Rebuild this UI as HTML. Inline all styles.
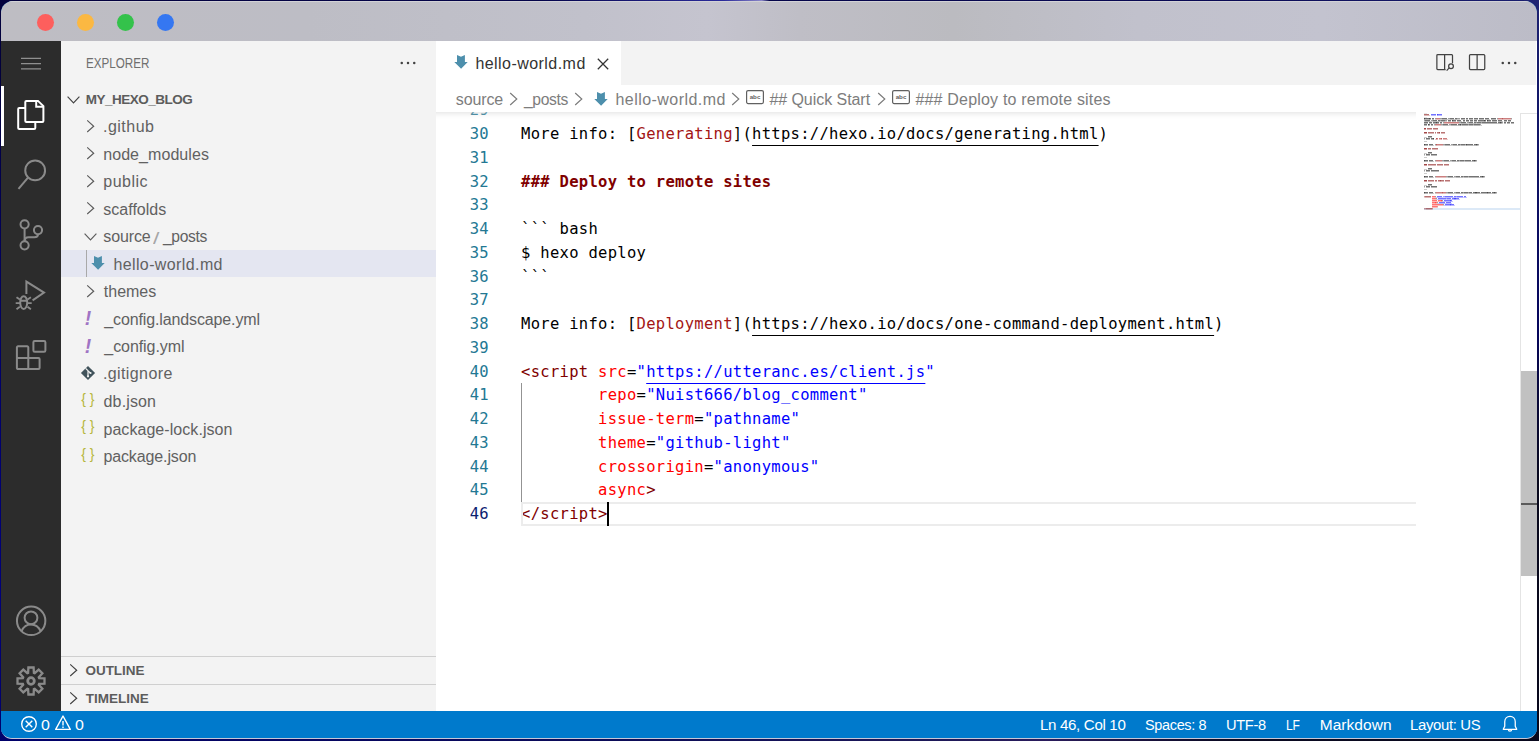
<!DOCTYPE html>
<html lang="en">
<head>
<meta charset="utf-8">
<title>hello-world.md - my_hexo_blog - Visual Studio Code</title>
<style>
*{box-sizing:border-box;margin:0;padding:0}
html,body{width:1539px;height:741px;overflow:hidden}
body{background:#05053a;font-family:"Liberation Sans",sans-serif;font-size:16px;color:#616161;position:relative}
.abs{position:absolute}
#win{position:absolute;left:1px;top:1px;width:1536px;height:738px;border-radius:12px 12px 11px 11px;overflow:hidden;background:#007acc;border-bottom:1px solid #c6c6d6}
#titlebar{position:absolute;left:0;top:0;width:1536px;height:40px;background:linear-gradient(90deg,#bebdc3 0%,#bdbdc5 20%,#c1c1cb 38%,#c5c4cf 46%,#bfbec6 52%,#bbbbc0 62%,#c1c1cc 74%,#c3c3cf 86%,#bcbcc7 100%);box-shadow:inset 0 1px 0 #d2d2d6}
.dot{position:absolute;top:12.9px;width:17px;height:17px;border-radius:50%}
#activity{position:absolute;left:0;top:40px;width:60px;height:670px;background:#2c2c2c}
#sidebar{position:absolute;left:60px;top:40px;width:375px;height:670px;background:#f3f3f3}
#editor{position:absolute;left:435px;top:40px;width:1101px;height:670px;background:#fff}
#status{position:absolute;left:0;top:710px;width:1536px;height:27px;background:#007acc;color:#fff;font-size:15.5px}
.ai{position:absolute;left:15px;width:30px;height:30px}
.ai svg{display:block;overflow:visible}
.row{position:absolute;left:0;width:375px;height:27.5px;line-height:27.5px;white-space:nowrap}
.row .t{position:absolute;top:0}
.chev{position:absolute;width:20px;height:20px;top:3.75px}
.chev svg{width:20px;height:20px;display:block}
.ic{position:absolute;top:3.75px;width:20px;height:20px}
.ic svg{width:20px;height:20px;display:block}
#code{position:absolute;left:0;top:0;width:1101px;height:670px;font-family:"DejaVu Sans Mono","Liberation Mono",monospace;font-size:15.5px;letter-spacing:0.294px;color:#000}
.ln{position:absolute;left:0;width:53px;text-align:right;height:23.75px;line-height:23.75px;color:#237893;white-space:pre}
.cl{position:absolute;left:85px;height:23.75px;line-height:23.75px;white-space:pre}
.r{color:#a31515}.m{color:#800000}.a{color:#f00}.s{color:#00f}
.u{text-decoration:underline;text-decoration-thickness:1px;text-underline-offset:6px}
.st{position:absolute;top:0;height:27px;line-height:27px;white-space:nowrap}
#crumbs svg,#tabs svg{display:block}
</style>
</head>
<body>
<div class="abs" style="left:0;top:0;width:3px;height:741px;background:linear-gradient(180deg,#02003c 0%,#02003c 10%,#000066 45%,#00007a 80%,#00006a 100%)"></div>
<div class="abs" style="left:0;top:0;width:1539px;height:14px;background:linear-gradient(90deg,#02003c 0%,#04044a 35%,#2a2a9a 47%,#8a86c8 49.500%,#05054a 50%,#0a0a55 80%,#1a1f70 100%)"></div>
<div class="abs" style="left:1524px;top:0;width:15px;height:741px;background:linear-gradient(180deg,#1f2473 0%,#141a6b 10%,#05055c 45%,#0a0a40 52%,#0a0a1e 65%,#08081c 100%)"></div>
<div class="abs" style="left:0;top:727px;width:1539px;height:14px;background:linear-gradient(90deg,#00006a 0%,#0c0c58 40%,#1c1858 60%,#2a1c5c 68%,#0a0a22 80%,#08081c 100%)"></div>
<div id="win">
  <div id="titlebar">
    <div class="dot" style="left:35.5px;background:#fd5f5d"></div>
    <div class="dot" style="left:75.5px;background:#fbb842"></div>
    <div class="dot" style="left:115.5px;background:#34c24b"></div>
    <div class="dot" style="left:155.5px;background:#3577f1"></div>
  </div>

  <div id="activity">
    <div class="abs" style="left:0;top:45px;width:2.5px;height:60px;background:#fff"></div>
    <!-- menu -->
    <div class="abs" style="left:20px;top:12.800px;width:20px;height:20px">
      <svg viewBox="0 0 16 16" width="20" height="20" style="display:block"><path d="M0 3.500h16M0 7.700h16M0 11.900h16" stroke="#8f8f8f" stroke-width="1" fill="none"/></svg>
    </div>
    <!-- files -->
    <div class="ai" style="top:59px"><svg viewBox="0 0 30 30" width="30" height="30" fill="none" stroke="#fff" stroke-width="2.0"><path d="M10.400 0.900H22l5.400 5.200V21a1.100 1.100 0 0 1-1.100 1.100H10.400A1.100 1.100 0 0 1 9.300 21V2a1.100 1.100 0 0 1 1.100-1.100z"/><path d="M20.200 0.900V6.800h7.200"/><path d="M9.300 8H3.300a1.100 1.100 0 0 0-1.100 1.100V27.900A1.100 1.100 0 0 0 3.300 29H18.200a1.100 1.100 0 0 0 1.100-1.100V22.100"/></svg></div>
    <div class="ai" style="top:119px"><svg viewBox="0 0 30 30" width="30" height="30" fill="none" stroke="#8a8a8a" stroke-width="2.0"><circle cx="19.150" cy="10.400" r="9.900"/><path d="M12.200 17.400 2.500 28.800"/></svg></div>
    <div class="ai" style="top:179px"><svg viewBox="0 0 30 30" width="30" height="30" fill="none" stroke="#8a8a8a" stroke-width="2.0"><circle cx="8.600" cy="4.300" r="4.100"/><circle cx="8.600" cy="25.300" r="4.100"/><circle cx="22" cy="10.100" r="4.100"/><path d="M8.600 8.400V21.200"/><path d="M22 14.200C22 16.500 20.500 17.300 18.500 17.300H12.500C10 17.300 8.600 18.800 8.600 21.200"/></svg></div>
    <div class="ai" style="top:239px"><svg viewBox="0 0 30 30" width="30" height="30" fill="none" stroke="#8a8a8a" stroke-width="2.0"><path d="M10.400 14V1.600L28 12.600 16.600 20.300"/><ellipse cx="7.700" cy="22.600" rx="3.500" ry="6.400"/><path d="M4.200 20.700h7M0.500 17.300l3.400 2.200M14.900 17.300l-3.400 2.200M-.3 23.100h4.400M15.700 23.100h-4.400M.5 29.200l3.400-2.400M14.900 29.200l-3.400-2.400" stroke-width="1.900"/></svg></div>
    <div class="ai" style="top:299px"><svg viewBox="0 0 30 30" width="30" height="30" fill="none" stroke="#8a8a8a" stroke-width="2.0"><path d="M2 6.300h9.200a1.100 1.100 0 0 1 1.100 1.100V18h10.200a1.100 1.100 0 0 1 1.100 1.100V27.900A1.100 1.100 0 0 1 22.500 29H2A1.100 1.100 0 0 1 .9 27.900V7.400A1.100 1.100 0 0 1 2 6.300z"/><path d="M.9 18H12.300V29"/><rect x="17.400" y="0.900" width="12" height="10.900" rx="1.300"/></svg></div>
    <div class="ai" style="top:565px"><svg viewBox="0 0 30 30" width="30" height="30" fill="none" stroke="#8a8a8a" stroke-width="2.0"><circle cx="15.150" cy="14.800" r="14.200"/><circle cx="15" cy="11.800" r="6.400"/><path d="M5.600 25.200C7.400 21 11 18.600 15 18.600S22.700 21 24.600 25.200"/></svg></div>
    <div class="ai" style="top:625px"><svg viewBox="0 0 30 30" width="30" height="30" fill="none" stroke="#8a8a8a" stroke-width="2.0"><path d="M12.1 6.9 L12.4 1.5 L17.6 1.5 L17.9 6.9 L18.7 7.2 L22.7 3.6 L26.4 7.3 L22.8 11.3 L23.1 12.1 L28.5 12.4 L28.5 17.6 L23.1 17.9 L22.8 18.7 L26.4 22.7 L22.7 26.4 L18.7 22.8 L17.9 23.1 L17.6 28.5 L12.4 28.5 L12.1 23.1 L11.3 22.8 L7.3 26.4 L3.6 22.7 L7.2 18.7 L6.9 17.9 L1.5 17.6 L1.5 12.4 L6.9 12.1 L7.2 11.3 L3.6 7.3 L7.3 3.6 L11.3 7.2z" stroke-linejoin="miter" stroke-width="2.300"/><circle cx="15" cy="15" r="3.300" stroke-width="2.800"/></svg></div>
  </div>

  <div id="sidebar">
    <div class="abs" style="left:24.77px;top:1px;height:44px;line-height:44px;font-size:13.750px;color:#6f6f6f;transform:scaleX(0.8476);transform-origin:0 50%;white-space:nowrap">EXPLORER</div>
    <div class="abs" style="left:337px;top:12px;width:20px;height:20px"><svg viewBox="0 0 16 16" width="20" height="20"><circle cx="3" cy="8" r="1" fill="#424242"/><circle cx="8" cy="8" r="1" fill="#424242"/><circle cx="13" cy="8" r="1" fill="#424242"/></svg></div>
    <div id="tree" class="abs" style="left:0;top:44.250px;width:375px">
      <div class="row" style="top:0.600px"><div class="chev" style="left:3px"><svg viewBox="0 0 20 20"><path d="M3.600 6.700 9.500 12.900 15.400 6.700" fill="none" stroke="#424242" stroke-width="1.15"/></svg></div><span class="t" style="left:24.69px;letter-spacing:-0.497px;font-size:13.5px;font-weight:bold;color:#5c5c5c">MY_HEXO_BLOG</span></div>
      <div class="row" style="top:27.5px"><div class="chev" style="left:20px"><svg viewBox="0 0 20 20"><path d="M6.200 3.400 12.700 9.200 6.200 15" fill="none" stroke="#5c5c5c" stroke-width="1.15"/></svg></div><span class="t" style="left:41.96px;letter-spacing:0.487px">.github</span></div>
      <div class="row" style="top:55.0px"><div class="chev" style="left:20px"><svg viewBox="0 0 20 20"><path d="M6.200 3.400 12.700 9.200 6.200 15" fill="none" stroke="#5c5c5c" stroke-width="1.15"/></svg></div><span class="t" style="left:42.24px;letter-spacing:0.062px;top:1px">node_modules</span></div>
      <div class="row" style="top:82.5px"><div class="chev" style="left:20px"><svg viewBox="0 0 20 20"><path d="M6.200 3.400 12.700 9.200 6.200 15" fill="none" stroke="#5c5c5c" stroke-width="1.15"/></svg></div><span class="t" style="left:42.24px;letter-spacing:0.496px">public</span></div>
      <div class="row" style="top:110.0px"><div class="chev" style="left:20px"><svg viewBox="0 0 20 20"><path d="M6.200 3.400 12.700 9.200 6.200 15" fill="none" stroke="#5c5c5c" stroke-width="1.15"/></svg></div><span class="t" style="left:42.32px;letter-spacing:0.010px;top:1px">scaffolds</span></div>
      <div class="row" style="top:137.5px"><div class="chev" style="left:20px"><svg viewBox="0 0 20 20"><path d="M3.600 6.700 9.500 12.900 15.400 6.700" fill="none" stroke="#5c5c5c" stroke-width="1.15"/></svg></div><span class="t" style="left:42.32px;letter-spacing:-0.136px">source</span><span class="t" style="left:92.20px;top:2.500px;font-size:17px;color:#a6a6a6;transform:scaleX(1.35);transform-origin:0 50%">/</span><span class="t" style="left:101.71px;letter-spacing:-0.350px;transform:scaleX(0.9759);transform-origin:0 50%">_posts</span></div>
      <div class="row" style="top:165.0px;background:#e4e6f1;height:26.750px"><div class="abs" style="left:25px;top:0;width:1px;height:26.750px;background:#a9a9a9"></div><div class="ic" style="left:27px"><svg viewBox="0 0 20 20"><path d="M6 1.900 10 3.700 13.900 1.900V9h2.800L10.100 15.800 3.300 9H6z" fill="#4d8fac"/></svg></div><span class="t" style="left:52.38px;letter-spacing:0.391px;top:1px">hello-world.md</span></div>
      <div class="row" style="top:192.5px"><div class="chev" style="left:20px"><svg viewBox="0 0 20 20"><path d="M6.200 3.400 12.700 9.200 6.200 15" fill="none" stroke="#5c5c5c" stroke-width="1.15"/></svg></div><span class="t" style="left:42.84px;letter-spacing:-0.008px">themes</span></div>
      <div class="row" style="top:220.0px"><div class="ic" style="left:17px"><svg viewBox="0 0 20 20"><text x="10" y="16" text-anchor="middle" font-family="Liberation Sans, sans-serif" font-size="19.500" font-weight="bold" font-style="italic" fill="#a074c4">!</text></svg></div><span class="t" style="left:43.32px;letter-spacing:-0.130px;top:1px">_config.landscape.yml</span></div>
      <div class="row" style="top:247.5px"><div class="ic" style="left:17px"><svg viewBox="0 0 20 20"><text x="10" y="16" text-anchor="middle" font-family="Liberation Sans, sans-serif" font-size="19.500" font-weight="bold" font-style="italic" fill="#a074c4">!</text></svg></div><span class="t" style="left:43.32px;letter-spacing:-0.072px">_config.yml</span></div>
      <div class="row" style="top:275.0px"><div class="ic" style="left:17px"><svg viewBox="0 0 20 20"><path d="M10 1.900 17.100 9 10 16.100 2.900 9z" fill="#41535b"/><path d="M7.600 4.300 12.200 8.900M10 6.400v5.800" stroke="#f3f3f3" stroke-width="1.200" fill="none"/><circle cx="12.500" cy="9" r="1.100" fill="#f3f3f3"/><circle cx="10" cy="12.300" r="1.100" fill="#f3f3f3"/></svg></div><span class="t" style="left:41.96px;letter-spacing:0.391px">.gitignore</span></div>
      <div class="row" style="top:302.5px"><div class="ic" style="left:17px"><svg viewBox="0 0 20 20"><text x="3.200" y="12.200" font-family="Liberation Sans, sans-serif" font-size="14" letter-spacing="4" fill="#b7b73b">{}</text></svg></div><span class="t" style="left:42.56px;letter-spacing:0.147px">db.json</span></div>
      <div class="row" style="top:330.0px"><div class="ic" style="left:17px"><svg viewBox="0 0 20 20"><text x="3.200" y="12.200" font-family="Liberation Sans, sans-serif" font-size="14" letter-spacing="4" fill="#b7b73b">{}</text></svg></div><span class="t" style="left:42.44px;letter-spacing:0.057px;top:1px">package-lock.json</span></div>
      <div class="row" style="top:357.5px"><div class="ic" style="left:17px"><svg viewBox="0 0 20 20"><text x="3.200" y="12.200" font-family="Liberation Sans, sans-serif" font-size="14" letter-spacing="4" fill="#b7b73b">{}</text></svg></div><span class="t" style="left:42.44px;letter-spacing:-0.120px">package.json</span></div>
    </div>
    <div class="abs" style="left:0;top:615px;width:375px;height:1px;background:#cfcfcf"></div><div class="row" style="top:616.1px"><div class="chev" style="left:3px;top:4.200px"><svg viewBox="0 0 20 20"><path d="M6.200 3.400 12.700 9.200 6.200 15" fill="none" stroke="#424242" stroke-width="1.15"/></svg></div><span class="t" style="left:24.46px;letter-spacing:-0.031px;font-size:13.5px;font-weight:bold;color:#5c5c5c">OUTLINE</span></div>
    <div class="abs" style="left:0;top:643px;width:375px;height:1px;background:#cfcfcf"></div><div class="row" style="top:644.1px"><div class="chev" style="left:3px;top:4.200px"><svg viewBox="0 0 20 20"><path d="M6.200 3.400 12.700 9.200 6.200 15" fill="none" stroke="#424242" stroke-width="1.15"/></svg></div><span class="t" style="left:24.86px;letter-spacing:-0.010px;font-size:13.5px;font-weight:bold;color:#5c5c5c">TIMELINE</span></div>
  </div>

  <div id="editor">
    <div id="code">
      <div class="ln" style="top:58.25px">29</div>
      <div class="ln" style="top:82.00px">30</div>
      <div class="cl" style="top:82.00px">More info: [<span class="r">Generating</span>](<span class="u">https://hexo.io/docs/generating.html</span>)</div>
      <div class="ln" style="top:105.75px">31</div>
      <div class="ln" style="top:129.50px">32</div>
      <div class="cl" style="top:129.50px"><b class="m">### Deploy to remote sites</b></div>
      <div class="ln" style="top:153.25px">33</div>
      <div class="ln" style="top:177.00px">34</div>
      <div class="cl" style="top:177.00px">``` bash</div>
      <div class="ln" style="top:200.75px">35</div>
      <div class="cl" style="top:200.75px">$ hexo deploy</div>
      <div class="ln" style="top:224.50px">36</div>
      <div class="cl" style="top:224.50px">```</div>
      <div class="ln" style="top:248.25px">37</div>
      <div class="ln" style="top:272.00px">38</div>
      <div class="cl" style="top:272.00px">More info: [<span class="r">Deployment</span>](<span class="u">https://hexo.io/docs/one-command-deployment.html</span>)</div>
      <div class="ln" style="top:295.75px">39</div>
      <div class="ln" style="top:319.50px">40</div>
      <div class="cl" style="top:319.50px"><span class="m">&lt;script</span> <span class="a">src</span>=<span class="s">"<span class="u">https://utteranc.es/client.js</span>"</span></div>
      <div class="ln" style="top:343.25px">41</div>
      <div class="cl" style="top:343.25px">        <span class="a">repo</span>=<span class="s">"Nuist666/blog_comment"</span></div>
      <div class="ln" style="top:367.00px">42</div>
      <div class="cl" style="top:367.00px">        <span class="a">issue-term</span>=<span class="s">"pathname"</span></div>
      <div class="ln" style="top:390.75px">43</div>
      <div class="cl" style="top:390.75px">        <span class="a">theme</span>=<span class="s">"github-light"</span></div>
      <div class="ln" style="top:414.50px">44</div>
      <div class="cl" style="top:414.50px">        <span class="a">crossorigin</span>=<span class="s">"anonymous"</span></div>
      <div class="ln" style="top:438.25px">45</div>
      <div class="cl" style="top:438.25px">        <span class="a">async</span><span class="m">&gt;</span></div>
      <div class="ln" style="top:462.00px;color:#0b216f">46</div>
      <div class="cl" style="top:462.00px"><span class="m">&lt;/script&gt;</span></div>
      <div class="abs" style="left:85px;top:461px;width:895px;height:24px;border-top:2px solid #ececec;border-bottom:2px solid #ececec;border-left:2px solid #ececec"></div>
      <div class="abs" style="left:85px;top:342.350px;width:1px;height:118.650px;background:#939393"></div>
      <div class="abs" style="left:170.500px;top:461px;width:2.500px;height:24px;background:#000"></div>
      <div class="abs" style="left:0;top:71px;width:980px;height:7.500px;box-shadow:inset 0 7.500px 7.500px -7.500px #d6d6d6"></div>
      <svg class="abs" style="left:988px;top:71px;background:#fff" width="96" height="100" viewBox="0 0 96 100" shape-rendering="crispEdges" aria-hidden="true"><rect x="0" y="96" width="96" height="2" fill="#dce9f7"/><rect x="0" y="0.5" width="3" height="1" fill="#808080" fill-opacity="0.20"/><rect x="0" y="2" width="5" height="1" fill="#800000" fill-opacity="0.55"/><rect x="0" y="3" width="5" height="1" fill="#800000" fill-opacity="0.28"/><rect x="5" y="2.5" width="1" height="1" fill="#800000" fill-opacity="0.20"/><rect x="7" y="2" width="5" height="1" fill="#0000ff" fill-opacity="0.55"/><rect x="7" y="3" width="5" height="1" fill="#0000ff" fill-opacity="0.28"/><rect x="13" y="2" width="1" height="1" fill="#0000ff" fill-opacity="0.72"/><rect x="13" y="3" width="1" height="1" fill="#0000ff" fill-opacity="0.36"/><rect x="14" y="2" width="4" height="1" fill="#0000ff" fill-opacity="0.55"/><rect x="14" y="3" width="4" height="1" fill="#0000ff" fill-opacity="0.28"/><rect x="0" y="4.5" width="3" height="1" fill="#808080" fill-opacity="0.20"/><rect x="0" y="6" width="1" height="1" fill="#000000" fill-opacity="0.72"/><rect x="0" y="7" width="1" height="1" fill="#000000" fill-opacity="0.36"/><rect x="1" y="6" width="4" height="1" fill="#000000" fill-opacity="0.55"/><rect x="1" y="7" width="4" height="1" fill="#000000" fill-opacity="0.28"/><rect x="5" y="6" width="1" height="1" fill="#000000" fill-opacity="0.72"/><rect x="5" y="7" width="1" height="1" fill="#000000" fill-opacity="0.36"/><rect x="6" y="6" width="1" height="1" fill="#000000" fill-opacity="0.55"/><rect x="6" y="7" width="1" height="1" fill="#000000" fill-opacity="0.28"/><rect x="8" y="6" width="2" height="1" fill="#000000" fill-opacity="0.55"/><rect x="8" y="7" width="2" height="1" fill="#000000" fill-opacity="0.28"/><rect x="11" y="6" width="1" height="1" fill="#000000" fill-opacity="0.38"/><rect x="11" y="7" width="1" height="1" fill="#000000" fill-opacity="0.19"/><rect x="12" y="6" width="4" height="1" fill="#a31515" fill-opacity="0.55"/><rect x="12" y="7" width="4" height="1" fill="#a31515" fill-opacity="0.28"/><rect x="16" y="6" width="2" height="1" fill="#000000" fill-opacity="0.38"/><rect x="16" y="7" width="2" height="1" fill="#000000" fill-opacity="0.19"/><rect x="18" y="6" width="5" height="1" fill="#000000" fill-opacity="0.55"/><rect x="18" y="7" width="5" height="1" fill="#000000" fill-opacity="0.28"/><rect x="23" y="6.5" width="1" height="1" fill="#000000" fill-opacity="0.20"/><rect x="24" y="6" width="2" height="1" fill="#000000" fill-opacity="0.38"/><rect x="24" y="7" width="2" height="1" fill="#000000" fill-opacity="0.19"/><rect x="26" y="6" width="4" height="1" fill="#000000" fill-opacity="0.55"/><rect x="26" y="7" width="4" height="1" fill="#000000" fill-opacity="0.28"/><rect x="30" y="6.5" width="1" height="1" fill="#000000" fill-opacity="0.20"/><rect x="31" y="6" width="2" height="1" fill="#000000" fill-opacity="0.55"/><rect x="31" y="7" width="2" height="1" fill="#000000" fill-opacity="0.28"/><rect x="33" y="6" width="3" height="1" fill="#000000" fill-opacity="0.38"/><rect x="33" y="7" width="3" height="1" fill="#000000" fill-opacity="0.19"/><rect x="37" y="6" width="4" height="1" fill="#000000" fill-opacity="0.55"/><rect x="37" y="7" width="4" height="1" fill="#000000" fill-opacity="0.28"/><rect x="42" y="6" width="2" height="1" fill="#000000" fill-opacity="0.55"/><rect x="42" y="7" width="2" height="1" fill="#000000" fill-opacity="0.28"/><rect x="45" y="6" width="4" height="1" fill="#000000" fill-opacity="0.55"/><rect x="45" y="7" width="4" height="1" fill="#000000" fill-opacity="0.28"/><rect x="50" y="6" width="4" height="1" fill="#000000" fill-opacity="0.55"/><rect x="50" y="7" width="4" height="1" fill="#000000" fill-opacity="0.28"/><rect x="55" y="6" width="5" height="1" fill="#000000" fill-opacity="0.55"/><rect x="55" y="7" width="5" height="1" fill="#000000" fill-opacity="0.28"/><rect x="61" y="6" width="4" height="1" fill="#000000" fill-opacity="0.55"/><rect x="61" y="7" width="4" height="1" fill="#000000" fill-opacity="0.28"/><rect x="65" y="6.5" width="1" height="1" fill="#000000" fill-opacity="0.20"/><rect x="67" y="6" width="5" height="1" fill="#000000" fill-opacity="0.55"/><rect x="67" y="7" width="5" height="1" fill="#000000" fill-opacity="0.28"/><rect x="73" y="6" width="1" height="1" fill="#000000" fill-opacity="0.38"/><rect x="73" y="7" width="1" height="1" fill="#000000" fill-opacity="0.19"/><rect x="74" y="6" width="4" height="1" fill="#a31515" fill-opacity="0.55"/><rect x="74" y="7" width="4" height="1" fill="#a31515" fill-opacity="0.28"/><rect x="78" y="6" width="1" height="1" fill="#a31515" fill-opacity="0.72"/><rect x="78" y="7" width="1" height="1" fill="#a31515" fill-opacity="0.36"/><rect x="79" y="6" width="8" height="1" fill="#a31515" fill-opacity="0.55"/><rect x="79" y="7" width="8" height="1" fill="#a31515" fill-opacity="0.28"/><rect x="87" y="6" width="1" height="1" fill="#000000" fill-opacity="0.38"/><rect x="87" y="7" width="1" height="1" fill="#000000" fill-opacity="0.19"/><rect x="0" y="8" width="1" height="1" fill="#000000" fill-opacity="0.38"/><rect x="0" y="9" width="1" height="1" fill="#000000" fill-opacity="0.19"/><rect x="1" y="8" width="5" height="1" fill="#000000" fill-opacity="0.55"/><rect x="1" y="9" width="5" height="1" fill="#000000" fill-opacity="0.28"/><rect x="6" y="8.5" width="1" height="1" fill="#000000" fill-opacity="0.20"/><rect x="7" y="8" width="2" height="1" fill="#000000" fill-opacity="0.38"/><rect x="7" y="9" width="2" height="1" fill="#000000" fill-opacity="0.19"/><rect x="9" y="8" width="4" height="1" fill="#000000" fill-opacity="0.55"/><rect x="9" y="9" width="4" height="1" fill="#000000" fill-opacity="0.28"/><rect x="13" y="8.5" width="1" height="1" fill="#000000" fill-opacity="0.20"/><rect x="14" y="8" width="2" height="1" fill="#000000" fill-opacity="0.55"/><rect x="14" y="9" width="2" height="1" fill="#000000" fill-opacity="0.28"/><rect x="16" y="8" width="1" height="1" fill="#000000" fill-opacity="0.38"/><rect x="16" y="9" width="1" height="1" fill="#000000" fill-opacity="0.19"/><rect x="17" y="8" width="4" height="1" fill="#000000" fill-opacity="0.55"/><rect x="17" y="9" width="4" height="1" fill="#000000" fill-opacity="0.28"/><rect x="21" y="8" width="2" height="1" fill="#000000" fill-opacity="0.38"/><rect x="21" y="9" width="2" height="1" fill="#000000" fill-opacity="0.19"/><rect x="24" y="8" width="3" height="1" fill="#000000" fill-opacity="0.55"/><rect x="24" y="9" width="3" height="1" fill="#000000" fill-opacity="0.28"/><rect x="28" y="8" width="1" height="1" fill="#000000" fill-opacity="0.72"/><rect x="28" y="9" width="1" height="1" fill="#000000" fill-opacity="0.36"/><rect x="29" y="8" width="3" height="1" fill="#000000" fill-opacity="0.55"/><rect x="29" y="9" width="3" height="1" fill="#000000" fill-opacity="0.28"/><rect x="33" y="8" width="4" height="1" fill="#000000" fill-opacity="0.55"/><rect x="33" y="9" width="4" height="1" fill="#000000" fill-opacity="0.28"/><rect x="37" y="8.5" width="1" height="1" fill="#000000" fill-opacity="0.20"/><rect x="39" y="8" width="2" height="1" fill="#000000" fill-opacity="0.55"/><rect x="39" y="9" width="2" height="1" fill="#000000" fill-opacity="0.28"/><rect x="42" y="8" width="3" height="1" fill="#000000" fill-opacity="0.55"/><rect x="42" y="9" width="3" height="1" fill="#000000" fill-opacity="0.28"/><rect x="46" y="8" width="3" height="1" fill="#000000" fill-opacity="0.55"/><rect x="46" y="9" width="3" height="1" fill="#000000" fill-opacity="0.28"/><rect x="50" y="8" width="3" height="1" fill="#000000" fill-opacity="0.55"/><rect x="50" y="9" width="3" height="1" fill="#000000" fill-opacity="0.28"/><rect x="54" y="8" width="6" height="1" fill="#000000" fill-opacity="0.55"/><rect x="54" y="9" width="6" height="1" fill="#000000" fill-opacity="0.28"/><rect x="60" y="8" width="1" height="1" fill="#000000" fill-opacity="0.72"/><rect x="60" y="9" width="1" height="1" fill="#000000" fill-opacity="0.36"/><rect x="61" y="8" width="1" height="1" fill="#000000" fill-opacity="0.55"/><rect x="61" y="9" width="1" height="1" fill="#000000" fill-opacity="0.28"/><rect x="63" y="8" width="1" height="1" fill="#000000" fill-opacity="0.72"/><rect x="63" y="9" width="1" height="1" fill="#000000" fill-opacity="0.36"/><rect x="64" y="8" width="3" height="1" fill="#000000" fill-opacity="0.55"/><rect x="64" y="9" width="3" height="1" fill="#000000" fill-opacity="0.28"/><rect x="68" y="8" width="5" height="1" fill="#000000" fill-opacity="0.55"/><rect x="68" y="9" width="5" height="1" fill="#000000" fill-opacity="0.28"/><rect x="74" y="8" width="4" height="1" fill="#000000" fill-opacity="0.55"/><rect x="74" y="9" width="4" height="1" fill="#000000" fill-opacity="0.28"/><rect x="78" y="8.5" width="1" height="1" fill="#000000" fill-opacity="0.20"/><rect x="80" y="8" width="3" height="1" fill="#000000" fill-opacity="0.55"/><rect x="80" y="9" width="3" height="1" fill="#000000" fill-opacity="0.28"/><rect x="84" y="8" width="3" height="1" fill="#000000" fill-opacity="0.55"/><rect x="84" y="9" width="3" height="1" fill="#000000" fill-opacity="0.28"/><rect x="0" y="10" width="4" height="1" fill="#000000" fill-opacity="0.55"/><rect x="0" y="11" width="4" height="1" fill="#000000" fill-opacity="0.28"/><rect x="5" y="10" width="3" height="1" fill="#000000" fill-opacity="0.55"/><rect x="5" y="11" width="3" height="1" fill="#000000" fill-opacity="0.28"/><rect x="9" y="10" width="3" height="1" fill="#000000" fill-opacity="0.55"/><rect x="9" y="11" width="3" height="1" fill="#000000" fill-opacity="0.28"/><rect x="12" y="10" width="1" height="1" fill="#000000" fill-opacity="0.72"/><rect x="12" y="11" width="1" height="1" fill="#000000" fill-opacity="0.36"/><rect x="13" y="10" width="2" height="1" fill="#000000" fill-opacity="0.55"/><rect x="13" y="11" width="2" height="1" fill="#000000" fill-opacity="0.28"/><rect x="16" y="10" width="2" height="1" fill="#000000" fill-opacity="0.55"/><rect x="16" y="11" width="2" height="1" fill="#000000" fill-opacity="0.28"/><rect x="19" y="10" width="1" height="1" fill="#000000" fill-opacity="0.38"/><rect x="19" y="11" width="1" height="1" fill="#000000" fill-opacity="0.19"/><rect x="20" y="10" width="15" height="1" fill="#a31515" fill-opacity="0.55"/><rect x="20" y="11" width="15" height="1" fill="#a31515" fill-opacity="0.28"/><rect x="35" y="10" width="2" height="1" fill="#000000" fill-opacity="0.38"/><rect x="35" y="11" width="2" height="1" fill="#000000" fill-opacity="0.19"/><rect x="37" y="10" width="5" height="1" fill="#000000" fill-opacity="0.55"/><rect x="37" y="11" width="5" height="1" fill="#000000" fill-opacity="0.28"/><rect x="42" y="10.5" width="1" height="1" fill="#000000" fill-opacity="0.20"/><rect x="43" y="10" width="2" height="1" fill="#000000" fill-opacity="0.38"/><rect x="43" y="11" width="2" height="1" fill="#000000" fill-opacity="0.19"/><rect x="45" y="10" width="4" height="1" fill="#000000" fill-opacity="0.55"/><rect x="45" y="11" width="4" height="1" fill="#000000" fill-opacity="0.28"/><rect x="49" y="10.5" width="1" height="1" fill="#000000" fill-opacity="0.20"/><rect x="50" y="10" width="2" height="1" fill="#000000" fill-opacity="0.55"/><rect x="50" y="11" width="2" height="1" fill="#000000" fill-opacity="0.28"/><rect x="52" y="10" width="1" height="1" fill="#000000" fill-opacity="0.38"/><rect x="52" y="11" width="1" height="1" fill="#000000" fill-opacity="0.19"/><rect x="53" y="10" width="4" height="1" fill="#000000" fill-opacity="0.55"/><rect x="53" y="11" width="4" height="1" fill="#000000" fill-opacity="0.28"/><rect x="57" y="10" width="1" height="1" fill="#000000" fill-opacity="0.38"/><rect x="57" y="11" width="1" height="1" fill="#000000" fill-opacity="0.19"/><rect x="58" y="10" width="15" height="1" fill="#000000" fill-opacity="0.55"/><rect x="58" y="11" width="15" height="1" fill="#000000" fill-opacity="0.28"/><rect x="73" y="10.5" width="1" height="1" fill="#000000" fill-opacity="0.20"/><rect x="74" y="10" width="2" height="1" fill="#000000" fill-opacity="0.55"/><rect x="74" y="11" width="2" height="1" fill="#000000" fill-opacity="0.28"/><rect x="76" y="10" width="1" height="1" fill="#000000" fill-opacity="0.72"/><rect x="76" y="11" width="1" height="1" fill="#000000" fill-opacity="0.36"/><rect x="77" y="10" width="1" height="1" fill="#000000" fill-opacity="0.55"/><rect x="77" y="11" width="1" height="1" fill="#000000" fill-opacity="0.28"/><rect x="78" y="10" width="1" height="1" fill="#000000" fill-opacity="0.38"/><rect x="78" y="11" width="1" height="1" fill="#000000" fill-opacity="0.19"/><rect x="80" y="10" width="2" height="1" fill="#000000" fill-opacity="0.55"/><rect x="80" y="11" width="2" height="1" fill="#000000" fill-opacity="0.28"/><rect x="83" y="10" width="3" height="1" fill="#000000" fill-opacity="0.55"/><rect x="83" y="11" width="3" height="1" fill="#000000" fill-opacity="0.28"/><rect x="87" y="10" width="3" height="1" fill="#000000" fill-opacity="0.55"/><rect x="87" y="11" width="3" height="1" fill="#000000" fill-opacity="0.28"/><rect x="0" y="12" width="3" height="1" fill="#000000" fill-opacity="0.55"/><rect x="0" y="13" width="3" height="1" fill="#000000" fill-opacity="0.28"/><rect x="4" y="12" width="1" height="1" fill="#000000" fill-opacity="0.72"/><rect x="4" y="13" width="1" height="1" fill="#000000" fill-opacity="0.36"/><rect x="5" y="12" width="1" height="1" fill="#000000" fill-opacity="0.55"/><rect x="5" y="13" width="1" height="1" fill="#000000" fill-opacity="0.28"/><rect x="7" y="12" width="2" height="1" fill="#000000" fill-opacity="0.55"/><rect x="7" y="13" width="2" height="1" fill="#000000" fill-opacity="0.28"/><rect x="10" y="12" width="1" height="1" fill="#000000" fill-opacity="0.38"/><rect x="10" y="13" width="1" height="1" fill="#000000" fill-opacity="0.19"/><rect x="11" y="12" width="6" height="1" fill="#a31515" fill-opacity="0.55"/><rect x="11" y="13" width="6" height="1" fill="#a31515" fill-opacity="0.28"/><rect x="17" y="12" width="2" height="1" fill="#000000" fill-opacity="0.38"/><rect x="17" y="13" width="2" height="1" fill="#000000" fill-opacity="0.19"/><rect x="19" y="12" width="5" height="1" fill="#000000" fill-opacity="0.55"/><rect x="19" y="13" width="5" height="1" fill="#000000" fill-opacity="0.28"/><rect x="24" y="12.5" width="1" height="1" fill="#000000" fill-opacity="0.20"/><rect x="25" y="12" width="2" height="1" fill="#000000" fill-opacity="0.38"/><rect x="25" y="13" width="2" height="1" fill="#000000" fill-opacity="0.19"/><rect x="27" y="12" width="6" height="1" fill="#000000" fill-opacity="0.55"/><rect x="27" y="13" width="6" height="1" fill="#000000" fill-opacity="0.28"/><rect x="33" y="12.5" width="1" height="1" fill="#000000" fill-opacity="0.20"/><rect x="34" y="12" width="2" height="1" fill="#000000" fill-opacity="0.55"/><rect x="34" y="13" width="2" height="1" fill="#000000" fill-opacity="0.28"/><rect x="36" y="12" width="1" height="1" fill="#000000" fill-opacity="0.72"/><rect x="36" y="13" width="1" height="1" fill="#000000" fill-opacity="0.36"/><rect x="37" y="12" width="1" height="1" fill="#000000" fill-opacity="0.38"/><rect x="37" y="13" width="1" height="1" fill="#000000" fill-opacity="0.19"/><rect x="38" y="12" width="6" height="1" fill="#000000" fill-opacity="0.55"/><rect x="38" y="13" width="6" height="1" fill="#000000" fill-opacity="0.28"/><rect x="44" y="12" width="1" height="1" fill="#000000" fill-opacity="0.38"/><rect x="44" y="13" width="1" height="1" fill="#000000" fill-opacity="0.19"/><rect x="45" y="12" width="4" height="1" fill="#000000" fill-opacity="0.55"/><rect x="45" y="13" width="4" height="1" fill="#000000" fill-opacity="0.28"/><rect x="49" y="12" width="1" height="1" fill="#000000" fill-opacity="0.38"/><rect x="49" y="13" width="1" height="1" fill="#000000" fill-opacity="0.19"/><rect x="50" y="12" width="6" height="1" fill="#000000" fill-opacity="0.55"/><rect x="50" y="13" width="6" height="1" fill="#000000" fill-opacity="0.28"/><rect x="56" y="12" width="1" height="1" fill="#000000" fill-opacity="0.38"/><rect x="56" y="13" width="1" height="1" fill="#000000" fill-opacity="0.19"/><rect x="57" y="12.5" width="1" height="1" fill="#000000" fill-opacity="0.20"/><rect x="0" y="16" width="2" height="1" fill="#800000" fill-opacity="0.72"/><rect x="0" y="17" width="2" height="1" fill="#800000" fill-opacity="0.36"/><rect x="3" y="16" width="5" height="1" fill="#800000" fill-opacity="0.55"/><rect x="3" y="17" width="5" height="1" fill="#800000" fill-opacity="0.28"/><rect x="9" y="16" width="5" height="1" fill="#800000" fill-opacity="0.55"/><rect x="9" y="17" width="5" height="1" fill="#800000" fill-opacity="0.28"/><rect x="0" y="20" width="3" height="1" fill="#800000" fill-opacity="0.72"/><rect x="0" y="21" width="3" height="1" fill="#800000" fill-opacity="0.36"/><rect x="4" y="20" width="6" height="1" fill="#800000" fill-opacity="0.55"/><rect x="4" y="21" width="6" height="1" fill="#800000" fill-opacity="0.28"/><rect x="11" y="20" width="1" height="1" fill="#800000" fill-opacity="0.55"/><rect x="11" y="21" width="1" height="1" fill="#800000" fill-opacity="0.28"/><rect x="13" y="20" width="2" height="1" fill="#800000" fill-opacity="0.55"/><rect x="13" y="21" width="2" height="1" fill="#800000" fill-opacity="0.28"/><rect x="15" y="20" width="1" height="1" fill="#800000" fill-opacity="0.72"/><rect x="15" y="21" width="1" height="1" fill="#800000" fill-opacity="0.36"/><rect x="17" y="20" width="4" height="1" fill="#800000" fill-opacity="0.55"/><rect x="17" y="21" width="4" height="1" fill="#800000" fill-opacity="0.28"/><rect x="0" y="24.5" width="3" height="1" fill="#000000" fill-opacity="0.20"/><rect x="4" y="24" width="4" height="1" fill="#000000" fill-opacity="0.55"/><rect x="4" y="25" width="4" height="1" fill="#000000" fill-opacity="0.28"/><rect x="0" y="26" width="1" height="1" fill="#000000" fill-opacity="0.38"/><rect x="0" y="27" width="1" height="1" fill="#000000" fill-opacity="0.19"/><rect x="2" y="26" width="4" height="1" fill="#000000" fill-opacity="0.55"/><rect x="2" y="27" width="4" height="1" fill="#000000" fill-opacity="0.28"/><rect x="7" y="26" width="2" height="1" fill="#000000" fill-opacity="0.55"/><rect x="7" y="27" width="2" height="1" fill="#000000" fill-opacity="0.28"/><rect x="9" y="26" width="1" height="1" fill="#000000" fill-opacity="0.72"/><rect x="9" y="27" width="1" height="1" fill="#000000" fill-opacity="0.36"/><rect x="11" y="26.5" width="1" height="1" fill="#a31515" fill-opacity="0.20"/><rect x="12" y="26" width="1" height="1" fill="#a31515" fill-opacity="0.72"/><rect x="12" y="27" width="1" height="1" fill="#a31515" fill-opacity="0.36"/><rect x="13" y="26" width="1" height="1" fill="#a31515" fill-opacity="0.55"/><rect x="13" y="27" width="1" height="1" fill="#a31515" fill-opacity="0.28"/><rect x="15" y="26" width="2" height="1" fill="#a31515" fill-opacity="0.55"/><rect x="15" y="27" width="2" height="1" fill="#a31515" fill-opacity="0.28"/><rect x="17" y="26" width="1" height="1" fill="#a31515" fill-opacity="0.72"/><rect x="17" y="27" width="1" height="1" fill="#a31515" fill-opacity="0.36"/><rect x="19" y="26" width="4" height="1" fill="#a31515" fill-opacity="0.55"/><rect x="19" y="27" width="4" height="1" fill="#a31515" fill-opacity="0.28"/><rect x="23" y="26.5" width="1" height="1" fill="#a31515" fill-opacity="0.20"/><rect x="0" y="28.5" width="3" height="1" fill="#000000" fill-opacity="0.20"/><rect x="0" y="32" width="1" height="1" fill="#000000" fill-opacity="0.72"/><rect x="0" y="33" width="1" height="1" fill="#000000" fill-opacity="0.36"/><rect x="1" y="32" width="3" height="1" fill="#000000" fill-opacity="0.55"/><rect x="1" y="33" width="3" height="1" fill="#000000" fill-opacity="0.28"/><rect x="5" y="32" width="4" height="1" fill="#000000" fill-opacity="0.55"/><rect x="5" y="33" width="4" height="1" fill="#000000" fill-opacity="0.28"/><rect x="9" y="32.5" width="1" height="1" fill="#000000" fill-opacity="0.20"/><rect x="11" y="32" width="1" height="1" fill="#000000" fill-opacity="0.38"/><rect x="11" y="33" width="1" height="1" fill="#000000" fill-opacity="0.19"/><rect x="12" y="32" width="1" height="1" fill="#a31515" fill-opacity="0.72"/><rect x="12" y="33" width="1" height="1" fill="#a31515" fill-opacity="0.36"/><rect x="13" y="32" width="6" height="1" fill="#a31515" fill-opacity="0.55"/><rect x="13" y="33" width="6" height="1" fill="#a31515" fill-opacity="0.28"/><rect x="19" y="32" width="2" height="1" fill="#000000" fill-opacity="0.38"/><rect x="19" y="33" width="2" height="1" fill="#000000" fill-opacity="0.19"/><rect x="21" y="32" width="5" height="1" fill="#000000" fill-opacity="0.55"/><rect x="21" y="33" width="5" height="1" fill="#000000" fill-opacity="0.28"/><rect x="26" y="32.5" width="1" height="1" fill="#000000" fill-opacity="0.20"/><rect x="27" y="32" width="2" height="1" fill="#000000" fill-opacity="0.38"/><rect x="27" y="33" width="2" height="1" fill="#000000" fill-opacity="0.19"/><rect x="29" y="32" width="4" height="1" fill="#000000" fill-opacity="0.55"/><rect x="29" y="33" width="4" height="1" fill="#000000" fill-opacity="0.28"/><rect x="33" y="32.5" width="1" height="1" fill="#000000" fill-opacity="0.20"/><rect x="34" y="32" width="2" height="1" fill="#000000" fill-opacity="0.55"/><rect x="34" y="33" width="2" height="1" fill="#000000" fill-opacity="0.28"/><rect x="36" y="32" width="1" height="1" fill="#000000" fill-opacity="0.38"/><rect x="36" y="33" width="1" height="1" fill="#000000" fill-opacity="0.19"/><rect x="37" y="32" width="4" height="1" fill="#000000" fill-opacity="0.55"/><rect x="37" y="33" width="4" height="1" fill="#000000" fill-opacity="0.28"/><rect x="41" y="32" width="1" height="1" fill="#000000" fill-opacity="0.38"/><rect x="41" y="33" width="1" height="1" fill="#000000" fill-opacity="0.19"/><rect x="42" y="32" width="1" height="1" fill="#000000" fill-opacity="0.72"/><rect x="42" y="33" width="1" height="1" fill="#000000" fill-opacity="0.36"/><rect x="43" y="32" width="6" height="1" fill="#000000" fill-opacity="0.55"/><rect x="43" y="33" width="6" height="1" fill="#000000" fill-opacity="0.28"/><rect x="49" y="32.5" width="1" height="1" fill="#000000" fill-opacity="0.20"/><rect x="50" y="32" width="2" height="1" fill="#000000" fill-opacity="0.55"/><rect x="50" y="33" width="2" height="1" fill="#000000" fill-opacity="0.28"/><rect x="52" y="32" width="1" height="1" fill="#000000" fill-opacity="0.72"/><rect x="52" y="33" width="1" height="1" fill="#000000" fill-opacity="0.36"/><rect x="53" y="32" width="1" height="1" fill="#000000" fill-opacity="0.55"/><rect x="53" y="33" width="1" height="1" fill="#000000" fill-opacity="0.28"/><rect x="54" y="32" width="1" height="1" fill="#000000" fill-opacity="0.38"/><rect x="54" y="33" width="1" height="1" fill="#000000" fill-opacity="0.19"/><rect x="0" y="36" width="3" height="1" fill="#800000" fill-opacity="0.72"/><rect x="0" y="37" width="3" height="1" fill="#800000" fill-opacity="0.36"/><rect x="4" y="36" width="3" height="1" fill="#800000" fill-opacity="0.55"/><rect x="4" y="37" width="3" height="1" fill="#800000" fill-opacity="0.28"/><rect x="8" y="36" width="6" height="1" fill="#800000" fill-opacity="0.55"/><rect x="8" y="37" width="6" height="1" fill="#800000" fill-opacity="0.28"/><rect x="0" y="40.5" width="3" height="1" fill="#000000" fill-opacity="0.20"/><rect x="4" y="40" width="4" height="1" fill="#000000" fill-opacity="0.55"/><rect x="4" y="41" width="4" height="1" fill="#000000" fill-opacity="0.28"/><rect x="0" y="42" width="1" height="1" fill="#000000" fill-opacity="0.38"/><rect x="0" y="43" width="1" height="1" fill="#000000" fill-opacity="0.19"/><rect x="2" y="42" width="4" height="1" fill="#000000" fill-opacity="0.55"/><rect x="2" y="43" width="4" height="1" fill="#000000" fill-opacity="0.28"/><rect x="7" y="42" width="6" height="1" fill="#000000" fill-opacity="0.55"/><rect x="7" y="43" width="6" height="1" fill="#000000" fill-opacity="0.28"/><rect x="0" y="44.5" width="3" height="1" fill="#000000" fill-opacity="0.20"/><rect x="0" y="48" width="1" height="1" fill="#000000" fill-opacity="0.72"/><rect x="0" y="49" width="1" height="1" fill="#000000" fill-opacity="0.36"/><rect x="1" y="48" width="3" height="1" fill="#000000" fill-opacity="0.55"/><rect x="1" y="49" width="3" height="1" fill="#000000" fill-opacity="0.28"/><rect x="5" y="48" width="4" height="1" fill="#000000" fill-opacity="0.55"/><rect x="5" y="49" width="4" height="1" fill="#000000" fill-opacity="0.28"/><rect x="9" y="48.5" width="1" height="1" fill="#000000" fill-opacity="0.20"/><rect x="11" y="48" width="1" height="1" fill="#000000" fill-opacity="0.38"/><rect x="11" y="49" width="1" height="1" fill="#000000" fill-opacity="0.19"/><rect x="12" y="48" width="6" height="1" fill="#a31515" fill-opacity="0.55"/><rect x="12" y="49" width="6" height="1" fill="#a31515" fill-opacity="0.28"/><rect x="18" y="48" width="2" height="1" fill="#000000" fill-opacity="0.38"/><rect x="18" y="49" width="2" height="1" fill="#000000" fill-opacity="0.19"/><rect x="20" y="48" width="5" height="1" fill="#000000" fill-opacity="0.55"/><rect x="20" y="49" width="5" height="1" fill="#000000" fill-opacity="0.28"/><rect x="25" y="48.5" width="1" height="1" fill="#000000" fill-opacity="0.20"/><rect x="26" y="48" width="2" height="1" fill="#000000" fill-opacity="0.38"/><rect x="26" y="49" width="2" height="1" fill="#000000" fill-opacity="0.19"/><rect x="28" y="48" width="4" height="1" fill="#000000" fill-opacity="0.55"/><rect x="28" y="49" width="4" height="1" fill="#000000" fill-opacity="0.28"/><rect x="32" y="48.5" width="1" height="1" fill="#000000" fill-opacity="0.20"/><rect x="33" y="48" width="2" height="1" fill="#000000" fill-opacity="0.55"/><rect x="33" y="49" width="2" height="1" fill="#000000" fill-opacity="0.28"/><rect x="35" y="48" width="1" height="1" fill="#000000" fill-opacity="0.38"/><rect x="35" y="49" width="1" height="1" fill="#000000" fill-opacity="0.19"/><rect x="36" y="48" width="4" height="1" fill="#000000" fill-opacity="0.55"/><rect x="36" y="49" width="4" height="1" fill="#000000" fill-opacity="0.28"/><rect x="40" y="48" width="1" height="1" fill="#000000" fill-opacity="0.38"/><rect x="40" y="49" width="1" height="1" fill="#000000" fill-opacity="0.19"/><rect x="41" y="48" width="6" height="1" fill="#000000" fill-opacity="0.55"/><rect x="41" y="49" width="6" height="1" fill="#000000" fill-opacity="0.28"/><rect x="47" y="48.5" width="1" height="1" fill="#000000" fill-opacity="0.20"/><rect x="48" y="48" width="2" height="1" fill="#000000" fill-opacity="0.55"/><rect x="48" y="49" width="2" height="1" fill="#000000" fill-opacity="0.28"/><rect x="50" y="48" width="1" height="1" fill="#000000" fill-opacity="0.72"/><rect x="50" y="49" width="1" height="1" fill="#000000" fill-opacity="0.36"/><rect x="51" y="48" width="1" height="1" fill="#000000" fill-opacity="0.55"/><rect x="51" y="49" width="1" height="1" fill="#000000" fill-opacity="0.28"/><rect x="52" y="48" width="1" height="1" fill="#000000" fill-opacity="0.38"/><rect x="52" y="49" width="1" height="1" fill="#000000" fill-opacity="0.19"/><rect x="0" y="52" width="3" height="1" fill="#800000" fill-opacity="0.72"/><rect x="0" y="53" width="3" height="1" fill="#800000" fill-opacity="0.36"/><rect x="4" y="52" width="8" height="1" fill="#800000" fill-opacity="0.55"/><rect x="4" y="53" width="8" height="1" fill="#800000" fill-opacity="0.28"/><rect x="13" y="52" width="6" height="1" fill="#800000" fill-opacity="0.55"/><rect x="13" y="53" width="6" height="1" fill="#800000" fill-opacity="0.28"/><rect x="20" y="52" width="5" height="1" fill="#800000" fill-opacity="0.55"/><rect x="20" y="53" width="5" height="1" fill="#800000" fill-opacity="0.28"/><rect x="0" y="56.5" width="3" height="1" fill="#000000" fill-opacity="0.20"/><rect x="4" y="56" width="4" height="1" fill="#000000" fill-opacity="0.55"/><rect x="4" y="57" width="4" height="1" fill="#000000" fill-opacity="0.28"/><rect x="0" y="58" width="1" height="1" fill="#000000" fill-opacity="0.38"/><rect x="0" y="59" width="1" height="1" fill="#000000" fill-opacity="0.19"/><rect x="2" y="58" width="4" height="1" fill="#000000" fill-opacity="0.55"/><rect x="2" y="59" width="4" height="1" fill="#000000" fill-opacity="0.28"/><rect x="7" y="58" width="8" height="1" fill="#000000" fill-opacity="0.55"/><rect x="7" y="59" width="8" height="1" fill="#000000" fill-opacity="0.28"/><rect x="0" y="60.5" width="3" height="1" fill="#000000" fill-opacity="0.20"/><rect x="0" y="64" width="1" height="1" fill="#000000" fill-opacity="0.72"/><rect x="0" y="65" width="1" height="1" fill="#000000" fill-opacity="0.36"/><rect x="1" y="64" width="3" height="1" fill="#000000" fill-opacity="0.55"/><rect x="1" y="65" width="3" height="1" fill="#000000" fill-opacity="0.28"/><rect x="5" y="64" width="4" height="1" fill="#000000" fill-opacity="0.55"/><rect x="5" y="65" width="4" height="1" fill="#000000" fill-opacity="0.28"/><rect x="9" y="64.5" width="1" height="1" fill="#000000" fill-opacity="0.20"/><rect x="11" y="64" width="1" height="1" fill="#000000" fill-opacity="0.38"/><rect x="11" y="65" width="1" height="1" fill="#000000" fill-opacity="0.19"/><rect x="12" y="64" width="10" height="1" fill="#a31515" fill-opacity="0.55"/><rect x="12" y="65" width="10" height="1" fill="#a31515" fill-opacity="0.28"/><rect x="22" y="64" width="2" height="1" fill="#000000" fill-opacity="0.38"/><rect x="22" y="65" width="2" height="1" fill="#000000" fill-opacity="0.19"/><rect x="24" y="64" width="5" height="1" fill="#000000" fill-opacity="0.55"/><rect x="24" y="65" width="5" height="1" fill="#000000" fill-opacity="0.28"/><rect x="29" y="64.5" width="1" height="1" fill="#000000" fill-opacity="0.20"/><rect x="30" y="64" width="2" height="1" fill="#000000" fill-opacity="0.38"/><rect x="30" y="65" width="2" height="1" fill="#000000" fill-opacity="0.19"/><rect x="32" y="64" width="4" height="1" fill="#000000" fill-opacity="0.55"/><rect x="32" y="65" width="4" height="1" fill="#000000" fill-opacity="0.28"/><rect x="36" y="64.5" width="1" height="1" fill="#000000" fill-opacity="0.20"/><rect x="37" y="64" width="2" height="1" fill="#000000" fill-opacity="0.55"/><rect x="37" y="65" width="2" height="1" fill="#000000" fill-opacity="0.28"/><rect x="39" y="64" width="1" height="1" fill="#000000" fill-opacity="0.38"/><rect x="39" y="65" width="1" height="1" fill="#000000" fill-opacity="0.19"/><rect x="40" y="64" width="4" height="1" fill="#000000" fill-opacity="0.55"/><rect x="40" y="65" width="4" height="1" fill="#000000" fill-opacity="0.28"/><rect x="44" y="64" width="1" height="1" fill="#000000" fill-opacity="0.38"/><rect x="44" y="65" width="1" height="1" fill="#000000" fill-opacity="0.19"/><rect x="45" y="64" width="10" height="1" fill="#000000" fill-opacity="0.55"/><rect x="45" y="65" width="10" height="1" fill="#000000" fill-opacity="0.28"/><rect x="55" y="64.5" width="1" height="1" fill="#000000" fill-opacity="0.20"/><rect x="56" y="64" width="2" height="1" fill="#000000" fill-opacity="0.55"/><rect x="56" y="65" width="2" height="1" fill="#000000" fill-opacity="0.28"/><rect x="58" y="64" width="1" height="1" fill="#000000" fill-opacity="0.72"/><rect x="58" y="65" width="1" height="1" fill="#000000" fill-opacity="0.36"/><rect x="59" y="64" width="1" height="1" fill="#000000" fill-opacity="0.55"/><rect x="59" y="65" width="1" height="1" fill="#000000" fill-opacity="0.28"/><rect x="60" y="64" width="1" height="1" fill="#000000" fill-opacity="0.38"/><rect x="60" y="65" width="1" height="1" fill="#000000" fill-opacity="0.19"/><rect x="0" y="68" width="3" height="1" fill="#800000" fill-opacity="0.72"/><rect x="0" y="69" width="3" height="1" fill="#800000" fill-opacity="0.36"/><rect x="4" y="68" width="6" height="1" fill="#800000" fill-opacity="0.55"/><rect x="4" y="69" width="6" height="1" fill="#800000" fill-opacity="0.28"/><rect x="11" y="68" width="2" height="1" fill="#800000" fill-opacity="0.55"/><rect x="11" y="69" width="2" height="1" fill="#800000" fill-opacity="0.28"/><rect x="14" y="68" width="2" height="1" fill="#800000" fill-opacity="0.55"/><rect x="14" y="69" width="2" height="1" fill="#800000" fill-opacity="0.28"/><rect x="16" y="68" width="1" height="1" fill="#800000" fill-opacity="0.72"/><rect x="16" y="69" width="1" height="1" fill="#800000" fill-opacity="0.36"/><rect x="17" y="68" width="3" height="1" fill="#800000" fill-opacity="0.55"/><rect x="17" y="69" width="3" height="1" fill="#800000" fill-opacity="0.28"/><rect x="21" y="68" width="5" height="1" fill="#800000" fill-opacity="0.55"/><rect x="21" y="69" width="5" height="1" fill="#800000" fill-opacity="0.28"/><rect x="0" y="72.5" width="3" height="1" fill="#000000" fill-opacity="0.20"/><rect x="4" y="72" width="4" height="1" fill="#000000" fill-opacity="0.55"/><rect x="4" y="73" width="4" height="1" fill="#000000" fill-opacity="0.28"/><rect x="0" y="74" width="1" height="1" fill="#000000" fill-opacity="0.38"/><rect x="0" y="75" width="1" height="1" fill="#000000" fill-opacity="0.19"/><rect x="2" y="74" width="4" height="1" fill="#000000" fill-opacity="0.55"/><rect x="2" y="75" width="4" height="1" fill="#000000" fill-opacity="0.28"/><rect x="7" y="74" width="6" height="1" fill="#000000" fill-opacity="0.55"/><rect x="7" y="75" width="6" height="1" fill="#000000" fill-opacity="0.28"/><rect x="0" y="76.5" width="3" height="1" fill="#000000" fill-opacity="0.20"/><rect x="0" y="80" width="1" height="1" fill="#000000" fill-opacity="0.72"/><rect x="0" y="81" width="1" height="1" fill="#000000" fill-opacity="0.36"/><rect x="1" y="80" width="3" height="1" fill="#000000" fill-opacity="0.55"/><rect x="1" y="81" width="3" height="1" fill="#000000" fill-opacity="0.28"/><rect x="5" y="80" width="4" height="1" fill="#000000" fill-opacity="0.55"/><rect x="5" y="81" width="4" height="1" fill="#000000" fill-opacity="0.28"/><rect x="9" y="80.5" width="1" height="1" fill="#000000" fill-opacity="0.20"/><rect x="11" y="80" width="1" height="1" fill="#000000" fill-opacity="0.38"/><rect x="11" y="81" width="1" height="1" fill="#000000" fill-opacity="0.19"/><rect x="12" y="80" width="6" height="1" fill="#a31515" fill-opacity="0.55"/><rect x="12" y="81" width="6" height="1" fill="#a31515" fill-opacity="0.28"/><rect x="18" y="80" width="1" height="1" fill="#a31515" fill-opacity="0.72"/><rect x="18" y="81" width="1" height="1" fill="#a31515" fill-opacity="0.36"/><rect x="19" y="80" width="3" height="1" fill="#a31515" fill-opacity="0.55"/><rect x="19" y="81" width="3" height="1" fill="#a31515" fill-opacity="0.28"/><rect x="22" y="80" width="2" height="1" fill="#000000" fill-opacity="0.38"/><rect x="22" y="81" width="2" height="1" fill="#000000" fill-opacity="0.19"/><rect x="24" y="80" width="5" height="1" fill="#000000" fill-opacity="0.55"/><rect x="24" y="81" width="5" height="1" fill="#000000" fill-opacity="0.28"/><rect x="29" y="80.5" width="1" height="1" fill="#000000" fill-opacity="0.20"/><rect x="30" y="80" width="2" height="1" fill="#000000" fill-opacity="0.38"/><rect x="30" y="81" width="2" height="1" fill="#000000" fill-opacity="0.19"/><rect x="32" y="80" width="4" height="1" fill="#000000" fill-opacity="0.55"/><rect x="32" y="81" width="4" height="1" fill="#000000" fill-opacity="0.28"/><rect x="36" y="80.5" width="1" height="1" fill="#000000" fill-opacity="0.20"/><rect x="37" y="80" width="2" height="1" fill="#000000" fill-opacity="0.55"/><rect x="37" y="81" width="2" height="1" fill="#000000" fill-opacity="0.28"/><rect x="39" y="80" width="1" height="1" fill="#000000" fill-opacity="0.38"/><rect x="39" y="81" width="1" height="1" fill="#000000" fill-opacity="0.19"/><rect x="40" y="80" width="4" height="1" fill="#000000" fill-opacity="0.55"/><rect x="40" y="81" width="4" height="1" fill="#000000" fill-opacity="0.28"/><rect x="44" y="80" width="1" height="1" fill="#000000" fill-opacity="0.38"/><rect x="44" y="81" width="1" height="1" fill="#000000" fill-opacity="0.19"/><rect x="45" y="80" width="3" height="1" fill="#000000" fill-opacity="0.55"/><rect x="45" y="81" width="3" height="1" fill="#000000" fill-opacity="0.28"/><rect x="48" y="80.5" width="1" height="1" fill="#000000" fill-opacity="0.20"/><rect x="49" y="80" width="2" height="1" fill="#000000" fill-opacity="0.55"/><rect x="49" y="81" width="2" height="1" fill="#000000" fill-opacity="0.28"/><rect x="51" y="80" width="2" height="1" fill="#000000" fill-opacity="0.72"/><rect x="51" y="81" width="2" height="1" fill="#000000" fill-opacity="0.36"/><rect x="53" y="80" width="3" height="1" fill="#000000" fill-opacity="0.55"/><rect x="53" y="81" width="3" height="1" fill="#000000" fill-opacity="0.28"/><rect x="56" y="80.5" width="1" height="1" fill="#000000" fill-opacity="0.20"/><rect x="57" y="80" width="6" height="1" fill="#000000" fill-opacity="0.55"/><rect x="57" y="81" width="6" height="1" fill="#000000" fill-opacity="0.28"/><rect x="63" y="80" width="1" height="1" fill="#000000" fill-opacity="0.72"/><rect x="63" y="81" width="1" height="1" fill="#000000" fill-opacity="0.36"/><rect x="64" y="80" width="3" height="1" fill="#000000" fill-opacity="0.55"/><rect x="64" y="81" width="3" height="1" fill="#000000" fill-opacity="0.28"/><rect x="67" y="80.5" width="1" height="1" fill="#000000" fill-opacity="0.20"/><rect x="68" y="80" width="2" height="1" fill="#000000" fill-opacity="0.55"/><rect x="68" y="81" width="2" height="1" fill="#000000" fill-opacity="0.28"/><rect x="70" y="80" width="1" height="1" fill="#000000" fill-opacity="0.72"/><rect x="70" y="81" width="1" height="1" fill="#000000" fill-opacity="0.36"/><rect x="71" y="80" width="1" height="1" fill="#000000" fill-opacity="0.55"/><rect x="71" y="81" width="1" height="1" fill="#000000" fill-opacity="0.28"/><rect x="72" y="80" width="1" height="1" fill="#000000" fill-opacity="0.38"/><rect x="72" y="81" width="1" height="1" fill="#000000" fill-opacity="0.19"/><rect x="0" y="84" width="1" height="1" fill="#800000" fill-opacity="0.38"/><rect x="0" y="85" width="1" height="1" fill="#800000" fill-opacity="0.19"/><rect x="1" y="84" width="6" height="1" fill="#800000" fill-opacity="0.55"/><rect x="1" y="85" width="6" height="1" fill="#800000" fill-opacity="0.28"/><rect x="8" y="84" width="3" height="1" fill="#ff0000" fill-opacity="0.55"/><rect x="8" y="85" width="3" height="1" fill="#ff0000" fill-opacity="0.28"/><rect x="11" y="84" width="1" height="1" fill="#000000" fill-opacity="0.38"/><rect x="11" y="85" width="1" height="1" fill="#000000" fill-opacity="0.19"/><rect x="12" y="84.5" width="1" height="1" fill="#0000ff" fill-opacity="0.20"/><rect x="13" y="84" width="5" height="1" fill="#0000ff" fill-opacity="0.55"/><rect x="13" y="85" width="5" height="1" fill="#0000ff" fill-opacity="0.28"/><rect x="18" y="84.5" width="1" height="1" fill="#0000ff" fill-opacity="0.20"/><rect x="19" y="84" width="2" height="1" fill="#0000ff" fill-opacity="0.38"/><rect x="19" y="85" width="2" height="1" fill="#0000ff" fill-opacity="0.19"/><rect x="21" y="84" width="8" height="1" fill="#0000ff" fill-opacity="0.55"/><rect x="21" y="85" width="8" height="1" fill="#0000ff" fill-opacity="0.28"/><rect x="29" y="84.5" width="1" height="1" fill="#0000ff" fill-opacity="0.20"/><rect x="30" y="84" width="2" height="1" fill="#0000ff" fill-opacity="0.55"/><rect x="30" y="85" width="2" height="1" fill="#0000ff" fill-opacity="0.28"/><rect x="32" y="84" width="1" height="1" fill="#0000ff" fill-opacity="0.38"/><rect x="32" y="85" width="1" height="1" fill="#0000ff" fill-opacity="0.19"/><rect x="33" y="84" width="6" height="1" fill="#0000ff" fill-opacity="0.55"/><rect x="33" y="85" width="6" height="1" fill="#0000ff" fill-opacity="0.28"/><rect x="39" y="84.5" width="1" height="1" fill="#0000ff" fill-opacity="0.20"/><rect x="40" y="84" width="2" height="1" fill="#0000ff" fill-opacity="0.55"/><rect x="40" y="85" width="2" height="1" fill="#0000ff" fill-opacity="0.28"/><rect x="42" y="84.5" width="1" height="1" fill="#0000ff" fill-opacity="0.20"/><rect x="8" y="86" width="4" height="1" fill="#ff0000" fill-opacity="0.55"/><rect x="8" y="87" width="4" height="1" fill="#ff0000" fill-opacity="0.28"/><rect x="12" y="86" width="1" height="1" fill="#000000" fill-opacity="0.38"/><rect x="12" y="87" width="1" height="1" fill="#000000" fill-opacity="0.19"/><rect x="13" y="86.5" width="1" height="1" fill="#0000ff" fill-opacity="0.20"/><rect x="14" y="86" width="8" height="1" fill="#0000ff" fill-opacity="0.55"/><rect x="14" y="87" width="8" height="1" fill="#0000ff" fill-opacity="0.28"/><rect x="22" y="86" width="1" height="1" fill="#0000ff" fill-opacity="0.38"/><rect x="22" y="87" width="1" height="1" fill="#0000ff" fill-opacity="0.19"/><rect x="23" y="86" width="4" height="1" fill="#0000ff" fill-opacity="0.55"/><rect x="23" y="87" width="4" height="1" fill="#0000ff" fill-opacity="0.28"/><rect x="27" y="86.5" width="1" height="1" fill="#0000ff" fill-opacity="0.20"/><rect x="28" y="86" width="2" height="1" fill="#0000ff" fill-opacity="0.55"/><rect x="28" y="87" width="2" height="1" fill="#0000ff" fill-opacity="0.28"/><rect x="30" y="86" width="2" height="1" fill="#0000ff" fill-opacity="0.72"/><rect x="30" y="87" width="2" height="1" fill="#0000ff" fill-opacity="0.36"/><rect x="32" y="86" width="3" height="1" fill="#0000ff" fill-opacity="0.55"/><rect x="32" y="87" width="3" height="1" fill="#0000ff" fill-opacity="0.28"/><rect x="35" y="86.5" width="1" height="1" fill="#0000ff" fill-opacity="0.20"/><rect x="8" y="88" width="5" height="1" fill="#ff0000" fill-opacity="0.55"/><rect x="8" y="89" width="5" height="1" fill="#ff0000" fill-opacity="0.28"/><rect x="13" y="88.5" width="1" height="1" fill="#ff0000" fill-opacity="0.20"/><rect x="14" y="88" width="3" height="1" fill="#ff0000" fill-opacity="0.55"/><rect x="14" y="89" width="3" height="1" fill="#ff0000" fill-opacity="0.28"/><rect x="17" y="88" width="1" height="1" fill="#ff0000" fill-opacity="0.72"/><rect x="17" y="89" width="1" height="1" fill="#ff0000" fill-opacity="0.36"/><rect x="18" y="88" width="1" height="1" fill="#000000" fill-opacity="0.38"/><rect x="18" y="89" width="1" height="1" fill="#000000" fill-opacity="0.19"/><rect x="19" y="88.5" width="1" height="1" fill="#0000ff" fill-opacity="0.20"/><rect x="20" y="88" width="6" height="1" fill="#0000ff" fill-opacity="0.55"/><rect x="20" y="89" width="6" height="1" fill="#0000ff" fill-opacity="0.28"/><rect x="26" y="88" width="1" height="1" fill="#0000ff" fill-opacity="0.72"/><rect x="26" y="89" width="1" height="1" fill="#0000ff" fill-opacity="0.36"/><rect x="27" y="88" width="1" height="1" fill="#0000ff" fill-opacity="0.55"/><rect x="27" y="89" width="1" height="1" fill="#0000ff" fill-opacity="0.28"/><rect x="28" y="88.5" width="1" height="1" fill="#0000ff" fill-opacity="0.20"/><rect x="8" y="90" width="3" height="1" fill="#ff0000" fill-opacity="0.55"/><rect x="8" y="91" width="3" height="1" fill="#ff0000" fill-opacity="0.28"/><rect x="11" y="90" width="1" height="1" fill="#ff0000" fill-opacity="0.72"/><rect x="11" y="91" width="1" height="1" fill="#ff0000" fill-opacity="0.36"/><rect x="12" y="90" width="1" height="1" fill="#ff0000" fill-opacity="0.55"/><rect x="12" y="91" width="1" height="1" fill="#ff0000" fill-opacity="0.28"/><rect x="13" y="90" width="1" height="1" fill="#000000" fill-opacity="0.38"/><rect x="13" y="91" width="1" height="1" fill="#000000" fill-opacity="0.19"/><rect x="14" y="90.5" width="1" height="1" fill="#0000ff" fill-opacity="0.20"/><rect x="15" y="90" width="6" height="1" fill="#0000ff" fill-opacity="0.55"/><rect x="15" y="91" width="6" height="1" fill="#0000ff" fill-opacity="0.28"/><rect x="21" y="90.5" width="1" height="1" fill="#0000ff" fill-opacity="0.20"/><rect x="22" y="90" width="5" height="1" fill="#0000ff" fill-opacity="0.55"/><rect x="22" y="91" width="5" height="1" fill="#0000ff" fill-opacity="0.28"/><rect x="27" y="90.5" width="1" height="1" fill="#0000ff" fill-opacity="0.20"/><rect x="8" y="92" width="11" height="1" fill="#ff0000" fill-opacity="0.55"/><rect x="8" y="93" width="11" height="1" fill="#ff0000" fill-opacity="0.28"/><rect x="19" y="92" width="1" height="1" fill="#000000" fill-opacity="0.38"/><rect x="19" y="93" width="1" height="1" fill="#000000" fill-opacity="0.19"/><rect x="20" y="92.5" width="1" height="1" fill="#0000ff" fill-opacity="0.20"/><rect x="21" y="92" width="5" height="1" fill="#0000ff" fill-opacity="0.55"/><rect x="21" y="93" width="5" height="1" fill="#0000ff" fill-opacity="0.28"/><rect x="26" y="92" width="1" height="1" fill="#0000ff" fill-opacity="0.72"/><rect x="26" y="93" width="1" height="1" fill="#0000ff" fill-opacity="0.36"/><rect x="27" y="92" width="3" height="1" fill="#0000ff" fill-opacity="0.55"/><rect x="27" y="93" width="3" height="1" fill="#0000ff" fill-opacity="0.28"/><rect x="30" y="92.5" width="1" height="1" fill="#0000ff" fill-opacity="0.20"/><rect x="8" y="94" width="5" height="1" fill="#ff0000" fill-opacity="0.55"/><rect x="8" y="95" width="5" height="1" fill="#ff0000" fill-opacity="0.28"/><rect x="13" y="94" width="1" height="1" fill="#800000" fill-opacity="0.38"/><rect x="13" y="95" width="1" height="1" fill="#800000" fill-opacity="0.19"/><rect x="0" y="96" width="2" height="1" fill="#800000" fill-opacity="0.38"/><rect x="0" y="97" width="2" height="1" fill="#800000" fill-opacity="0.19"/><rect x="2" y="96" width="6" height="1" fill="#800000" fill-opacity="0.55"/><rect x="2" y="97" width="6" height="1" fill="#800000" fill-opacity="0.28"/><rect x="8" y="96" width="1" height="1" fill="#800000" fill-opacity="0.38"/><rect x="8" y="97" width="1" height="1" fill="#800000" fill-opacity="0.19"/></svg>
      <div class="abs" style="left:1085px;top:71.500px;width:16px;height:1px;background:#e4e4e4"></div>
      <div class="abs" style="left:1084px;top:71.500px;width:1px;height:599px;background:#e4e4e4"></div>
      <div class="abs" style="left:1085px;top:330px;width:16px;height:205px;background:#c1c1c1"></div>
      <div class="abs" style="left:1085px;top:462px;width:16px;height:2px;background:#5a5a5a"></div>
      
    </div>
    <div id="tabs" class="abs" style="left:0;top:0;width:1101px;height:44px;background:#f3f3f3">
      <div class="abs" style="left:0;top:0;width:184.500px;height:44px;background:#fff"></div>
      <div class="ic" style="left:15px;top:12.400px"><svg viewBox="0 0 20 20"><path d="M6 1.900 10 3.700 13.900 1.900V9h2.800L10.100 15.800 3.300 9H6z" fill="#4d8fac"/></svg></div>
      <div class="abs" id="tabname" style="left:39.38px;letter-spacing:0.452px;top:1px;height:44px;line-height:44px;color:#333;white-space:nowrap">hello-world.md</div>
      <div class="abs" style="left:156.500px;top:12.500px;width:20px;height:20px"><svg viewBox="0 0 20 20" width="20" height="20"><path d="M4.800 4.800l10.400 10.400M15.200 4.800 4.800 15.200" stroke="#333" stroke-width="1.250" fill="none"/></svg></div>
      <!-- editor actions -->
      <div class="abs" style="left:999px;top:10.800px;width:20px;height:20px"><svg viewBox="0 0 16 16" width="20" height="20"><path d="M14 9V2.700a.7.700 0 0 0-.7-.7H2.200a.7.700 0 0 0-.7.700v10.600a.7.700 0 0 0 .7.700H8.500M7.700 2v12" stroke="#424242" stroke-width="1" fill="none"/><circle cx="12.800" cy="11.300" r="1.900" stroke="#424242" stroke-width="1" fill="none"/><path d="M11.400 12.700 9.300 14.900" stroke="#424242" stroke-width="1" fill="none"/></svg></div>
      <div class="abs" style="left:1030.800px;top:10.800px;width:20px;height:20px"><svg viewBox="0 0 16 16" width="20" height="20"><rect x="2" y="2" width="12.200" height="12" rx=".8" stroke="#424242" stroke-width="1" fill="none"/><path d="M8.100 2v12" stroke="#424242" stroke-width="1" fill="none"/></svg></div>
      <div class="abs" style="left:1062.700px;top:12.300px;width:20px;height:20px"><svg viewBox="0 0 16 16" width="20" height="20"><circle cx="3" cy="8" r="1" fill="#424242"/><circle cx="8" cy="8" r="1" fill="#424242"/><circle cx="13" cy="8" r="1" fill="#424242"/></svg></div>
    </div>
    <div id="crumbs" class="abs" style="left:0;top:44px;width:1101px;height:27px;background:#fff;color:#7d7d7d;line-height:27.500px;white-space:nowrap;">
      <span class="abs" style="left:19.82px;letter-spacing:-0.136px;top:0.750px">source</span>
      <div class="abs chv" style="left:68px;top:3.750px"><svg viewBox="0 0 20 20" width="20" height="20"><path d="M6.200 4 12.800 10 6.200 16" fill="none" stroke="#7a7a7a" stroke-width="1.150"/></svg></div>
      <span class="abs" style="left:87.81px;letter-spacing:-0.350px;transform:scaleX(0.9781);transform-origin:0 50%;top:0.750px">_posts</span>
      <div class="abs chv" style="left:133px;top:3.750px"><svg viewBox="0 0 20 20" width="20" height="20"><path d="M6.200 4 12.800 10 6.200 16" fill="none" stroke="#7a7a7a" stroke-width="1.150"/></svg></div>
      <div class="abs" style="left:155.100px;top:5px"><svg viewBox="0 0 20 20" width="20" height="20"><path d="M6 1.900 10 3.700 13.900 1.900V9h2.800L10.100 15.800 3.300 9H6z" fill="#4d8fac"/></svg></div>
      <span class="abs" style="left:179.48px;letter-spacing:0.452px;top:0.750px">hello-world.md</span>
      <div class="abs chv" style="left:289.500px;top:3.750px"><svg viewBox="0 0 20 20" width="20" height="20"><path d="M6.200 4 12.800 10 6.200 16" fill="none" stroke="#7a7a7a" stroke-width="1.150"/></svg></div>
      <div class="abs" style="left:308.500px;top:2.400px"><svg viewBox="0 0 20 20" width="20" height="20"><rect x="1.600" y="3.600" width="16.800" height="13" rx="1.500" stroke="#616161" stroke-width="1.200" fill="none"/><text x="10" y="12.200" font-family="Liberation Sans, sans-serif" font-size="6.200" font-weight="bold" text-anchor="middle" fill="#616161">abc</text></svg></div>
      <span class="abs" style="left:333.40px;letter-spacing:-0.052px;top:0.750px">## Quick Start</span>
      <div class="abs chv" style="left:435.500px;top:3.750px"><svg viewBox="0 0 20 20" width="20" height="20"><path d="M6.200 4 12.800 10 6.200 16" fill="none" stroke="#7a7a7a" stroke-width="1.150"/></svg></div>
      <div class="abs" style="left:455px;top:2.400px"><svg viewBox="0 0 20 20" width="20" height="20"><rect x="1.600" y="3.600" width="16.800" height="13" rx="1.500" stroke="#616161" stroke-width="1.200" fill="none"/><text x="10" y="12.200" font-family="Liberation Sans, sans-serif" font-size="6.200" font-weight="bold" text-anchor="middle" fill="#616161">abc</text></svg></div>
      <span class="abs" style="left:479.40px;letter-spacing:0.194px;top:0.750px">### Deploy to remote sites</span>
    </div>
  </div>

  <div class="abs" style="left:1535px;top:40px;width:1px;height:44px;background:#fff"></div>
  <div id="status">
    <div class="abs" style="left:19px;top:3.500px;width:18px;height:18px"><svg viewBox="0 0 18 18" width="18" height="18"><circle cx="9" cy="9" r="7.300" stroke="#fff" stroke-width="1.400" fill="none"/><path d="M5.700 5.700l6.600 6.600M12.300 5.700l-6.600 6.600" stroke="#fff" stroke-width="1.400" fill="none"/></svg></div>
    <span class="st" style="left:39.86px;letter-spacing:0.350px;transform:scaleX(1.0270);transform-origin:0 50%">0</span>
    <div class="abs" style="left:53px;top:3.200px;width:18px;height:18px"><svg viewBox="0 0 18 18" width="18" height="18"><path d="M9 2 16.300 15.400H1.700z" stroke="#fff" stroke-width="1.400" fill="none" stroke-linejoin="round"/><path d="M9 7v4.500M9 12.600v1.400" stroke="#fff" stroke-width="1.400" fill="none"/></svg></div>
    <span class="st" style="left:73.86px;letter-spacing:0.350px;transform:scaleX(1.0270);transform-origin:0 50%">0</span>
    <span class="st" style="left:1038.79px;letter-spacing:-0.350px;transform:scaleX(0.9749);transform-origin:0 50%">Ln 46, Col 10</span>
    <span class="st" style="left:1143.88px;letter-spacing:-0.350px;transform:scaleX(0.9324);transform-origin:0 50%">Spaces: 8</span>
    <span class="st" style="left:1224.98px;letter-spacing:-0.350px;transform:scaleX(0.9434);transform-origin:0 50%">UTF-8</span>
    <span class="st" style="left:1284.63px;letter-spacing:-0.350px;transform:scaleX(0.7786);transform-origin:0 50%">LF</span>
    <span class="st" style="left:1318.76px;letter-spacing:0.045px">Markdown</span>
    <span class="st" style="left:1409.41px;letter-spacing:-0.350px;transform:scaleX(0.9614);transform-origin:0 50%">Layout: US</span>
    <div class="abs" style="left:1499px;top:2.700px;width:20px;height:20px"><svg viewBox="0 0 16 16" width="20" height="20"><path d="M8 1.800c-2.500 0-4.200 1.900-4.200 4.400v3.600L2.600 12.200h10.800L12.200 9.800V6.200c0-2.500-1.700-4.400-4.200-4.400zM6.700 12.400a1.300 1.300 0 0 0 2.600 0" stroke="#fff" stroke-width="1" fill="none" stroke-linejoin="round"/></svg></div>
  </div>
</div>
</body>
</html>
